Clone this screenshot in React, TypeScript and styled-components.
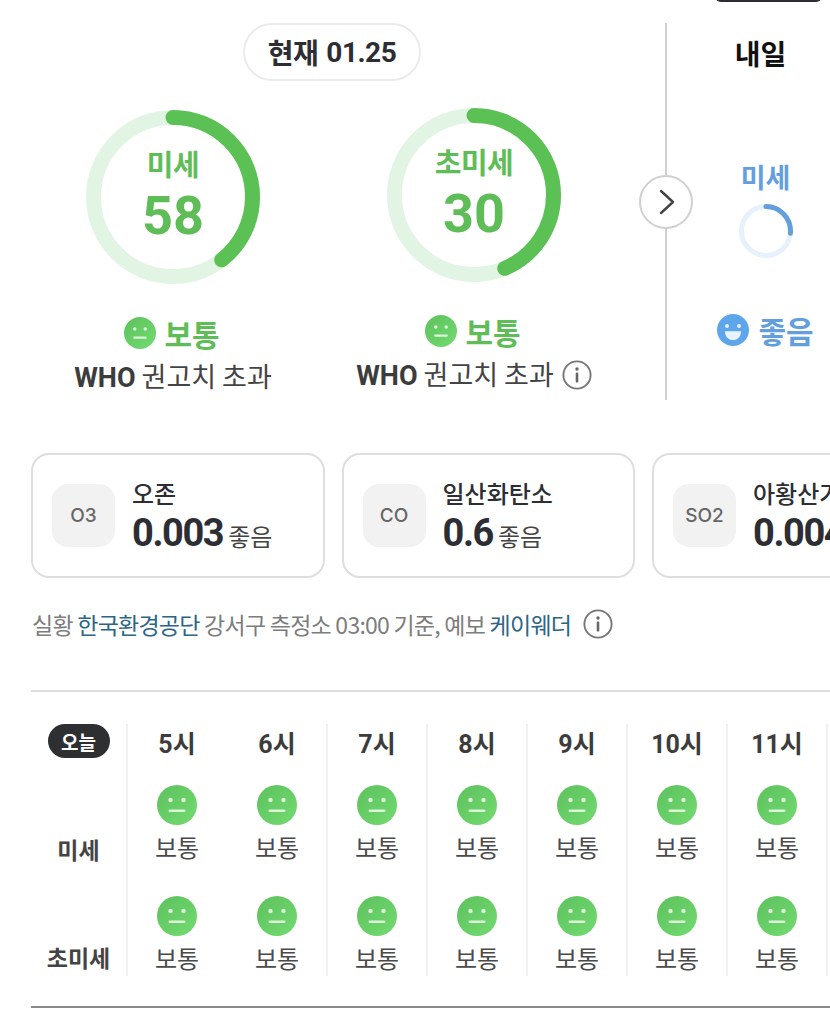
import styled, { createGlobalStyle } from 'styled-components';

const KR = `"Noto Sans CJK KR", "Noto Sans", sans-serif`;
const NUM = `Roboto, "Noto Sans CJK KR", sans-serif`;

const GlobalStyle = createGlobalStyle`
  html, body {
    margin: 0;
    padding: 0;
    background: #fff;
    overflow: hidden;
  }
  body {
    font-family: ${KR};
  }
`;

const HOURS = ['5시', '6시', '7시', '8시', '9시', '10시', '11시'];

const POLLUTANTS = [
  { code: 'O3', name: '오존', value: '0.003' },
  { code: 'CO', name: '일산화탄소', value: '0.6' },
  { code: 'SO2', name: '아황산가스', value: '0.004' },
];

const Ring = ({ size, stroke, angle, track, color }: { size: number; stroke: number; angle: number; track: string; color: string }) => {
  const r = (size - stroke) / 2;
  const c = 2 * Math.PI * r;
  return (
    <svg width={size} height={size} viewBox={`0 0 ${size} ${size}`}>
      <circle cx={size / 2} cy={size / 2} r={r} fill="none" stroke={track} strokeWidth={stroke} />
      <circle
        cx={size / 2}
        cy={size / 2}
        r={r}
        fill="none"
        stroke={color}
        strokeWidth={stroke}
        strokeLinecap="round"
        strokeDasharray={`${(c * angle) / 360} ${c}`}
        transform={`rotate(-90 ${size / 2} ${size / 2})`}
      />
    </svg>
  );
};

const NeutralFace = ({ size }: { size: number }) => (
  <svg width={size} height={size} viewBox="0 0 40 40">
    <defs>
      <linearGradient id="neutralFill" x1="0.15" y1="0.1" x2="0.9" y2="0.9">
        <stop offset="0" stopColor="#60c460" />
        <stop offset="1" stopColor="#70d96e" />
      </linearGradient>
    </defs>
    <circle cx="20" cy="20" r="20" fill="url(#neutralFill)" />
    <circle cx="13.5" cy="15" r="2.2" fill="#dcf5d9" />
    <circle cx="26.5" cy="15" r="2.2" fill="#dcf5d9" />
    <rect x="11.5" y="24.5" width="17" height="2.6" rx="1.3" fill="#dcf5d9" />
  </svg>
);

const HappyFace = ({ size }: { size: number }) => (
  <svg width={size} height={size} viewBox="0 0 40 40">
    <circle cx="20" cy="20" r="20" fill="#5ea6ec" />
    <circle cx="12.5" cy="15" r="2.4" fill="#e8f3fd" />
    <circle cx="27.5" cy="15" r="2.4" fill="#e8f3fd" />
    <path d="M10 21.5h20c0 7-4.5 11-10 11s-10-4-10-11z" fill="#e8f3fd" />
  </svg>
);

const InfoIcon = ({ size }: { size: number }) => (
  <svg width={size} height={size} viewBox="0 0 30 30" fill="none">
    <circle cx="15" cy="15" r="13.6" stroke="#777" strokeWidth="1.9" />
    <circle cx="15" cy="9" r="1.7" fill="#666" />
    <rect x="13.7" y="12.6" width="2.6" height="10" rx="1.2" fill="#666" />
  </svg>
);

const App = () => (
  <Page>
    <GlobalStyle />
    <TabPeek />
    <Top>
      <Current>
        <DatePill>
          현재 <DateNum>01.25</DateNum>
        </DatePill>
        <Gauges>
          <GaugeCol $lift={0}>
            <GaugeBox>
              <Ring size={174} stroke={15} angle={142} track="#e2f5e4" color="#5cc155" />
              <GaugeText>
                <GaugeLabel>미세</GaugeLabel>
                <GaugeValue>58</GaugeValue>
              </GaugeText>
            </GaugeBox>
            <Status>
              <NeutralFace size={32} />
              <StatusText>보통</StatusText>
            </Status>
            <Who>
              <span>
                <b>WHO</b> 권고치 초과
              </span>
            </Who>
          </GaugeCol>
          <GaugeCol $lift={2}>
            <GaugeBox>
              <Ring size={174} stroke={15} angle={157} track="#e2f5e4" color="#5cc155" />
              <GaugeText>
                <GaugeLabel>초미세</GaugeLabel>
                <GaugeValue>30</GaugeValue>
              </GaugeText>
            </GaugeBox>
            <Status>
              <NeutralFace size={32} />
              <StatusText>보통</StatusText>
            </Status>
            <Who>
              <span>
                <b>WHO</b> 권고치 초과
              </span>
              <InfoIcon size={30} />
            </Who>
          </GaugeCol>
        </Gauges>
      </Current>
      <Tomorrow>
        <NextButton>
          <svg width="18" height="26" viewBox="0 0 18 26" fill="none">
            <path d="M3 2l12 11L3 24" stroke="#444" strokeWidth="2.4" strokeLinecap="round" strokeLinejoin="round" />
          </svg>
        </NextButton>
        <TomorrowTitle>내일</TomorrowTitle>
        <SmallLabel>미세</SmallLabel>
        <SmallRing>
          <Ring size={54} stroke={5} angle={95} track="#e6f1fb" color="#639fdc" />
        </SmallRing>
        <TomorrowStatus>
          <HappyFace size={32} />
          <TomorrowStatusText>좋음</TomorrowStatusText>
        </TomorrowStatus>
      </Tomorrow>
    </Top>

    <Cards>
      {POLLUTANTS.map((p) => (
        <Card key={p.code}>
          <CodeBadge>{p.code}</CodeBadge>
          <CardBody>
            <CardName>{p.name}</CardName>
            <CardValueRow>
              <CardValue>{p.value}</CardValue>
              <CardGrade>좋음</CardGrade>
            </CardValueRow>
          </CardBody>
        </Card>
      ))}
    </Cards>

    <Source>
      <span>
        실황 <SourceLink>한국환경공단</SourceLink> 강서구 측정소 03:00 기준, 예보 <SourceLink>케이웨더</SourceLink>
      </span>
      <InfoIcon size={30} />
    </Source>

    <Forecast>
      <RowLabels>
        <TodayTag>오늘</TodayTag>
        <RowLabel $top={74}>미세</RowLabel>
        <RowLabel $top={74}>초미세</RowLabel>
      </RowLabels>
      {HOURS.map((h, i) => (
        <HourCol key={h} $line={i > 0}>
          <HourLabel>{h}</HourLabel>
          <HourCell>
            <NeutralFace size={40} />
            <HourGrade>보통</HourGrade>
          </HourCell>
          <HourCell>
            <NeutralFace size={40} />
            <HourGrade>보통</HourGrade>
          </HourCell>
        </HourCol>
      ))}
    </Forecast>
  </Page>
);

const Page = styled.div`
  position: relative;
  width: 830px;
  height: 1012px;
  overflow: hidden;
  background: #fff;
`;

const TabPeek = styled.div`
  position: absolute;
  top: -10px;
  left: 715px;
  width: 107px;
  height: 12px;
  border-radius: 8px;
  background: #2b2d31;
`;

const Top = styled.section`
  display: flex;
  height: 377px;
  padding: 23px 0 0 31px;
`;

const Current = styled.div`
  display: flex;
  flex-direction: column;
  align-items: center;
  flex: 0 0 634px;
  padding-right: 32px;
  box-sizing: border-box;
`;

const DatePill = styled.div`
  display: flex;
  align-items: center;
  justify-content: center;
  gap: 8px;
  box-sizing: border-box;
  width: 178px;
  height: 58px;
  border: 2px solid #ebebeb;
  border-radius: 29px;
  font-size: 28px;
  font-weight: 700;
  color: #2c2e33;
  letter-spacing: -0.5px;
`;

const DateNum = styled.span`
  font-family: ${NUM};
  font-weight: 700;
  font-size: 28px;
`;

const Gauges = styled.div`
  display: flex;
  gap: 17px;
  width: 100%;
  margin-top: 29px;
`;

const GaugeCol = styled.div<{ $lift: number }>`
  display: flex;
  flex-direction: column;
  align-items: center;
  width: 284px;
  margin-top: ${(p) => -p.$lift}px;
`;

const GaugeBox = styled.div`
  position: relative;
  width: 174px;
  height: 174px;

  svg {
    display: block;
  }
`;

const GaugeText = styled.div`
  position: absolute;
  inset: 0;
  display: flex;
  flex-direction: column;
  align-items: center;
  padding-top: 33px;
  color: #5fbd58;
`;

const GaugeLabel = styled.div`
  font-size: 29px;
  font-weight: 700;
  line-height: 40px;
  letter-spacing: -0.5px;
`;

const GaugeValue = styled.div`
  font-family: ${NUM};
  font-size: 54px;
  font-weight: 700;
  line-height: 62px;
  margin-top: 2px;
`;

const Status = styled.div`
  display: flex;
  align-items: center;
  gap: 8px;
  margin-top: 29px;
  height: 40px;
  margin-left: -2px;
`;

const StatusText = styled.span`
  font-size: 30px;
  font-weight: 700;
  color: #5fbd58;
  line-height: 40px;
`;

const Who = styled.div`
  display: flex;
  align-items: center;
  gap: 8px;
  margin-top: 5px;
  font-size: 27px;
  line-height: 36px;
  color: #444;
  white-space: nowrap;

  b {
    font-family: ${NUM};
    font-weight: 700;
    color: #3c3c3c;
  }
`;

const Tomorrow = styled.div`
  position: relative;
  display: flex;
  flex-direction: column;
  align-items: center;
  flex: 0 0 199px;
  height: 377px;
  border-left: 2px solid #d0d0d0;
  box-sizing: border-box;
`;

const NextButton = styled.div`
  position: absolute;
  top: 152px;
  left: -28px;
  display: flex;
  align-items: center;
  justify-content: center;
  box-sizing: border-box;
  width: 54px;
  height: 54px;
  padding-left: 2px;
  border: 2px solid #d0d0d0;
  border-radius: 50%;
  background: #fff;
`;

const TomorrowTitle = styled.div`
  margin-top: 11px;
  margin-left: -10px;
  font-size: 28px;
  font-weight: 700;
  line-height: 38px;
  color: #111;
`;

const SmallLabel = styled.div`
  margin-top: 86px;
  font-size: 27px;
  font-weight: 700;
  line-height: 38px;
  color: #639fdc;
`;

const SmallRing = styled.div`
  display: flex;
  margin-top: 8px;
`;

const TomorrowStatus = styled.div`
  display: flex;
  align-items: center;
  gap: 9px;
  margin-top: 52px;
`;

const TomorrowStatusText = styled.span`
  font-size: 30px;
  font-weight: 700;
  color: #639fdc;
  line-height: 40px;
`;

const Cards = styled.div`
  display: flex;
  gap: 17px;
  width: 1000px;
  padding-left: 31px;
  margin-top: 53px;
`;

const Card = styled.div`
  flex: 0 0 293.5px;
  display: flex;
  align-items: center;
  gap: 17px;
  box-sizing: border-box;
  height: 125px;
  padding-left: 19px;
  border: 2px solid #dedede;
  border-radius: 18px;
`;

const CodeBadge = styled.div`
  display: flex;
  align-items: center;
  justify-content: center;
  width: 63px;
  height: 63px;
  border-radius: 16px;
  background: #f2f2f2;
  font-family: Inter, sans-serif;
  font-size: 19px;
  font-weight: 500;
  color: #666;
`;

const CardBody = styled.div`
  display: flex;
  flex-direction: column;
  white-space: nowrap;
`;

const CardName = styled.div`
  font-size: 24px;
  font-weight: 500;
  line-height: 34px;
  color: #2c2e33;
`;

const CardValueRow = styled.div`
  display: flex;
  align-items: baseline;
  gap: 5px;
  margin-top: 1px;
`;

const CardValue = styled.span`
  font-family: ${NUM};
  font-size: 38px;
  font-weight: 700;
  line-height: 44px;
  color: #2c2e33;
  letter-spacing: -1.4px;
`;

const CardGrade = styled.span`
  font-size: 24px;
  color: #444;
`;

const Source = styled.div`
  display: flex;
  align-items: center;
  gap: 12px;
  height: 34px;
  margin-top: 29px;
  padding-left: 32px;
  font-size: 23px;
  color: #7d7d7d;
  letter-spacing: -0.75px;
  white-space: pre;
`;

const SourceLink = styled.span`
  color: #2c6585;
`;

const Forecast = styled.div`
  display: flex;
  box-sizing: border-box;
  height: 318px;
  margin: 49px 0 0 31px;
  padding-top: 32px;
  border-top: 2px solid #dcdcdc;
  border-bottom: 2px solid #8a8a8a;
`;

const RowLabels = styled.div`
  display: flex;
  flex: 0 0 97px;
  flex-direction: column;
  align-items: center;
  box-sizing: border-box;
  height: 252px;
  border-right: 2px solid #f0f0f0;
`;

const TodayTag = styled.div`
  display: flex;
  align-items: center;
  justify-content: center;
  width: 62px;
  height: 34px;
  border-radius: 17px;
  background: #2e2f31;
  color: #fff;
  font-size: 19px;
  font-weight: 700;
`;

const RowLabel = styled.div<{ $top: number }>`
  margin-top: ${(p) => p.$top}px;
  font-size: 23px;
  font-weight: 700;
  line-height: 34px;
  color: #444;
`;

const HourCol = styled.div<{ $line: boolean }>`
  display: flex;
  flex: 0 0 100px;
  flex-direction: column;
  align-items: center;
  box-sizing: border-box;
  height: 252px;
  border-right: 2px solid ${(p) => (p.$line ? '#f0f0f0' : 'transparent')};
`;

const HourLabel = styled.div`
  margin-top: 3px;
  font-family: ${NUM};
  font-size: 25px;
  font-weight: 700;
  line-height: 36px;
  color: #3c3c3c;
`;

const HourCell = styled.div`
  display: flex;
  flex-direction: column;
  align-items: center;
  margin-top: 22px;

  & + & {
    margin-top: 32px;
  }

  svg {
    display: block;
  }
`;

const HourGrade = styled.div`
  margin-top: 5px;
  font-size: 24px;
  line-height: 34px;
  color: #4a4a4a;
`;

export default App;
